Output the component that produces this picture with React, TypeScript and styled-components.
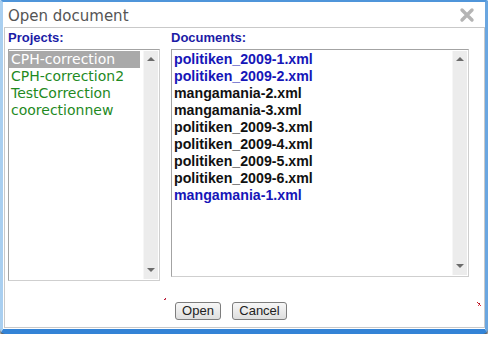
import React from "react";
import styled, { createGlobalStyle } from "styled-components";

const Global = createGlobalStyle`
  html, body { margin: 0; padding: 0; background: #ffffff; }
  body { font-family: "Liberation Sans", Arial, sans-serif; }
`;

const Window = styled.div`
  box-sizing: border-box;
  width: 488px;
  height: 334px;
  background: #ffffff;
  border-top: 2px solid #4f95da;
  border-left: 3px solid #a9cff0;
  border-right: 3px solid #6aa6e0;
  border-bottom: 5px solid #3383d6;
  border-radius: 2px 2px 5px 5px;
  box-shadow: 0 3px 2px rgba(40, 40, 40, 0.75);
  display: flex;
  flex-direction: column;
`;

const TitleBar = styled.div`
  height: 25px;
  box-sizing: border-box;
  padding: 3px 6px 0 5px;
  display: flex;
  align-items: flex-start;
  justify-content: space-between;
`;

const Title = styled.div`
  font-family: "DejaVu Sans", Verdana, sans-serif;
  font-size: 15px;
  line-height: 22px;
  color: #555555;
`;

const Close = styled.div`
  width: 16px;
  height: 16px;
  margin-top: 2px;
  margin-right: 4px;
`;

const Panel = styled.div`
  box-sizing: border-box;
  margin: 0 0 1px 1px;
  height: 301px;
  border: 1px solid #c9c9c9;
  display: flex;
  flex-direction: column;
  padding: 2px 14px 0 3px;
`;

const Columns = styled.div`
  display: grid;
  grid-template-columns: 152px 298px;
  column-gap: 11px;
`;

const Column = styled.div`
  position: relative;
  display: flex;
  flex-direction: column;
`;

const Label = styled.div`
  font-family: "Liberation Sans", Arial, sans-serif;
  font-weight: bold;
  font-size: 13px;
  line-height: 16px;
  color: #1c1ca6;
  margin-bottom: 3px;
`;

const ListBox = styled.div<{ $h: number }>`
  box-sizing: border-box;
  height: ${(p) => p.$h}px;
  border: 1px solid #a3a3a3;
  border-right-color: #cfcfcf;
  border-bottom-color: #cfcfcf;
  display: flex;
`;

const Items = styled.div<{ $gap: number }>`
  flex: 1;
  padding-top: 1px;
  padding-right: ${(p) => p.$gap}px;
  overflow: hidden;
`;

const ProjectRow = styled.div<{ $selected?: boolean }>`
  font-family: "DejaVu Sans", Verdana, sans-serif;
  font-size: 14px;
  line-height: 17px;
  height: 17px;
  padding-left: 2px;
  white-space: nowrap;
  color: ${(p) => (p.$selected ? "#ffffff" : "#1f8a1f")};
  background: ${(p) => (p.$selected ? "#a9a9a9" : "transparent")};
`;

const DocRow = styled.div<{ $blue?: boolean }>`
  font-family: "Liberation Sans", Arial, sans-serif;
  font-weight: bold;
  font-size: 14.2px;
  line-height: 17px;
  height: 17px;
  padding-left: 2px;
  white-space: nowrap;
  color: ${(p) => (p.$blue ? "#1616b8" : "#111111")};
`;

const Scrollbar = styled.div`
  width: 15px;
  background: #ececec;
  border-left: 1px solid #f6f6f6;
  margin: 1px 1px 1px 0;
  display: flex;
  flex-direction: column;
  justify-content: space-between;
  align-items: center;
  padding: 6px 0 7px;
  box-sizing: border-box;
`;

const Arrow = styled.div<{ $down?: boolean }>`
  width: 0;
  height: 0;
  border-left: 4px solid transparent;
  border-right: 4px solid transparent;
  ${(p) =>
    p.$down
      ? "border-top: 4px solid #6b6b6b;"
      : "border-bottom: 4px solid #6b6b6b;"}
`;

const Grip = styled.div<{ $right: number; $bottom: number }>`
  position: absolute;
  right: ${(p) => p.$right}px;
  bottom: ${(p) => p.$bottom}px;
  width: 6px;
  height: 6px;
`;

const ButtonRow = styled.div`
  display: flex;
  gap: 11px;
  padding-left: 167px;
  margin-top: 21px;
`;

const Button = styled.button<{ $w: number }>`
  box-sizing: border-box;
  width: ${(p) => p.$w}px;
  height: 18px;
  padding: 0;
  font-family: "Liberation Sans", Arial, sans-serif;
  font-size: 13px;
  line-height: 16px;
  color: #222222;
  background: linear-gradient(#f7f7f7, #dedede);
  border: 1px solid #7d7d7d;
  border-radius: 3px;
`;

const projects = ["CPH-correction", "CPH-correction2", "TestCorrection", "coorectionnew"];
const docs: [string, boolean][] = [
  ["politiken_2009-1.xml", true],
  ["politiken_2009-2.xml", true],
  ["mangamania-2.xml", false],
  ["mangamania-3.xml", false],
  ["politiken_2009-3.xml", false],
  ["politiken_2009-4.xml", false],
  ["politiken_2009-5.xml", false],
  ["politiken_2009-6.xml", false],
  ["mangamania-1.xml", true],
];

const GripIcon = ({ big }: { big?: boolean }) => (
  <svg width="6" height="6" viewBox="0 0 6 6">
    {big ? (
      <>
        <rect x="1" y="1" width="1" height="1" fill="#d02020" />
        <rect x="2" y="2" width="2" height="1" fill="#b01830" />
        <rect x="3" y="3" width="1" height="1" fill="#d02020" />
        <rect x="4" y="4" width="1" height="1" fill="#e03040" />
        <rect x="2" y="4" width="1" height="1" fill="#e04050" />
      </>
    ) : (
      <>
        <rect x="3" y="2" width="1" height="1" fill="#b01838" />
        <rect x="2" y="3" width="1" height="1" fill="#b01838" />
        <rect x="3" y="3" width="1" height="1" fill="#e06070" />
      </>
    )}
  </svg>
);

export default function App() {
  return (
    <>
      <Global />
      <Window>
        <TitleBar>
          <Title>Open document</Title>
          <Close>
            <svg width="16" height="16" viewBox="0 0 16 16">
              <path
                d="M3 3 L13 13 M13 3 L3 13"
                stroke="#b4b4b4"
                strokeWidth="3.4"
                strokeLinecap="round"
              />
            </svg>
          </Close>
        </TitleBar>
        <Panel>
          <Columns>
            <Column>
              <Label>Projects:</Label>
              <ListBox $h={232}>
                <Items $gap={3}>
                  {projects.map((p, i) => (
                    <ProjectRow key={p} $selected={i === 0}>
                      {p}
                    </ProjectRow>
                  ))}
                </Items>
                <Scrollbar>
                  <Arrow />
                  <Arrow $down />
                </Scrollbar>
              </ListBox>
              <Grip $right={-8} $bottom={-13}>
                <GripIcon />
              </Grip>
            </Column>
            <Column>
              <Label>Documents:</Label>
              <ListBox $h={228}>
                <Items $gap={0}>
                  {docs.map(([d, blue]) => (
                    <DocRow key={d} $blue={blue}>
                      {d}
                    </DocRow>
                  ))}
                </Items>
                <Scrollbar>
                  <Arrow />
                  <Arrow $down />
                </Scrollbar>
              </ListBox>
              <Grip $right={-13} $bottom={-18}>
                <GripIcon big />
              </Grip>
            </Column>
          </Columns>
          <ButtonRow>
            <Button $w={46}>Open</Button>
            <Button $w={55}>Cancel</Button>
          </ButtonRow>
        </Panel>
      </Window>
    </>
  );
}
